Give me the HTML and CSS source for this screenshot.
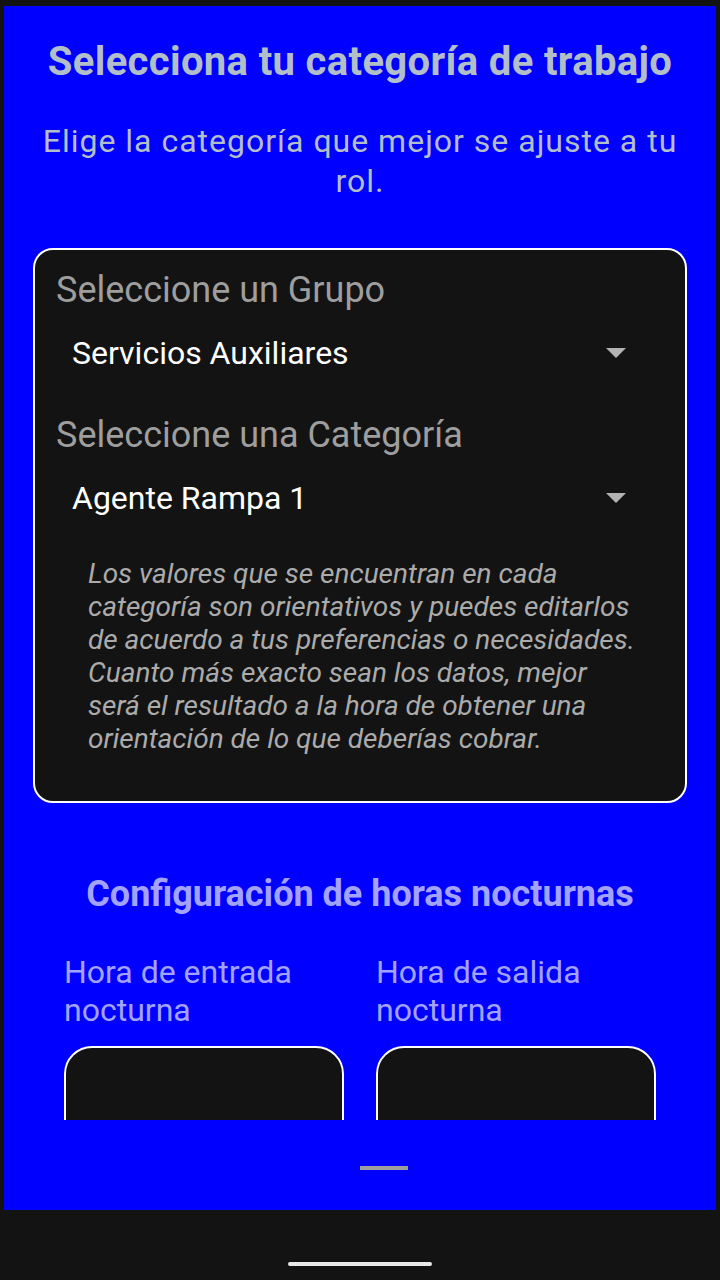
FILE: index.html
```html
<!DOCTYPE html>
<html lang="es">
<head>
<meta charset="utf-8">
<title>Categoría de trabajo</title>
<link rel="stylesheet" href="styles.css">
</head>
<body>
<div class="screen">
  <div class="scroll">
    <h1 class="title">Selecciona tu categoría de trabajo</h1>
    <p class="subtitle">Elige la categoría que mejor se ajuste a tu rol.</p>
    <div class="card">
      <div class="label">Seleccione un Grupo</div>
      <div class="select">
        <span class="value">Servicios Auxiliares</span>
        <svg class="arrow" width="20" height="10" viewBox="0 0 20 10"><path d="M0 0H20L10 10Z" fill="#b3b3b3"/></svg>
      </div>
      <div class="label second">Seleccione una Categoría</div>
      <div class="select">
        <span class="value">Agente Rampa 1</span>
        <svg class="arrow" width="20" height="10" viewBox="0 0 20 10"><path d="M0 0H20L10 10Z" fill="#b3b3b3"/></svg>
      </div>
      <p class="note">Los valores que se encuentran en cada categoría son orientativos y puedes editarlos de acuerdo a tus preferencias o necesidades. Cuanto más exacto sean los datos, mejor será el resultado a la hora de obtener una orientación de lo que deberías cobrar.</p>
    </div>
    <h2 class="section-title">Configuración de horas nocturnas</h2>
    <div class="hours">
      <div class="hour-col">
        <div class="hour-label">Hora de entrada nocturna</div>
        <div class="hour-box"></div>
      </div>
      <div class="hour-col">
        <div class="hour-label">Hora de salida nocturna</div>
        <div class="hour-box"></div>
      </div>
    </div>
  </div>
  <div class="sheet-bar">
    <div class="handle"></div>
  </div>
</div>
<div class="navbar">
  <div class="pill"></div>
</div>
</body>
</html>
```

FILE: styles.css
```css
html, body {
  margin: 0;
  padding: 0;
}
body {
  width: 720px;
  height: 1280px;
  overflow: hidden;
  background: #131313;
  font-family: Roboto, "Noto Sans", sans-serif;
}
.screen {
  margin: 6px 4px 0;
  height: 1204px;
  background: #0000ff;
  display: flex;
  flex-direction: column;
}
.scroll {
  height: 1114px;
  overflow: hidden;
  flex: none;
}
.title {
  margin: 32px 0 0;
  font-size: 40px;
  line-height: 48px;
  font-weight: 700;
  color: #b3bfc8;
  text-align: center;
  letter-spacing: 0.35px;
}
.subtitle {
  margin: 35px 28px 0;
  font-size: 32px;
  line-height: 40px;
  font-weight: 400;
  color: #b3bfc8;
  text-align: center;
  letter-spacing: 1px;
}
.card {
  margin: 47px 29px 0;
  background: #131313;
  border: 2px solid #ffffff;
  border-radius: 20px;
  padding: 18px 21px 46px;
}
.label {
  font-size: 36px;
  line-height: 44px;
  color: #9e9e9e;
}
.label.second {
  margin-top: 28px;
}
.select {
  margin-top: 9px;
  height: 64px;
  display: flex;
  align-items: center;
  justify-content: space-between;
  padding: 0 38px 0 16px;
}
.value {
  font-size: 32px;
  color: #ffffff;
}
.arrow {
  display: block;
  flex: none;
}
.note {
  margin: 27px 26px 0 32px;
  font-size: 28px;
  line-height: 33px;
  font-style: italic;
  color: #ababab;
}
.section-title {
  margin: 69px 0 0;
  font-size: 36px;
  line-height: 44px;
  font-weight: 700;
  color: #a3a3ff;
  text-align: center;
}
.hours {
  margin: 37px 60px 0;
  display: grid;
  grid-template-columns: 280px 280px;
  column-gap: 32px;
}
.hour-label {
  font-size: 32px;
  line-height: 38px;
  color: #a3a3ff;
}
.hour-box {
  margin-top: 17px;
  height: 140px;
  background: #131313;
  border: 2px solid #ffffff;
  border-radius: 28px;
  box-sizing: border-box;
}
.sheet-bar {
  flex: 1;
  display: flex;
  justify-content: center;
  padding-top: 46px;
}
.handle {
  width: 48px;
  height: 4px;
  margin-left: 48px;
  background: #9e9e9e;
}
.navbar {
  height: 70px;
  display: flex;
  justify-content: center;
  padding-top: 52px;
  box-sizing: border-box;
}
.pill {
  width: 144px;
  height: 4px;
  border-radius: 2px;
  background: #e8e8e8;
}
```
